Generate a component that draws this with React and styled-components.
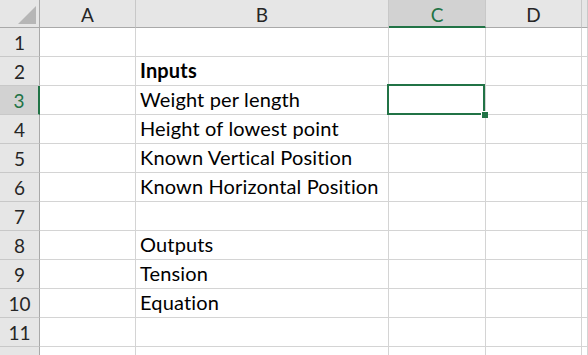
import React from "react";
import styled, { createGlobalStyle, css } from "styled-components";

const GlobalStyle = createGlobalStyle`
  html, body {
    margin: 0;
    padding: 0;
    background: #ffffff;
    overflow: hidden;
  }
  body {
    font-family: Lato, "Open Sans", sans-serif;
  }
`;

const columns = ["A", "B", "C", "D", ""];
const selectedCol = "C";
const selectedRow = 3;

const cellText = {
  2: { text: "Inputs", bold: true },
  3: { text: "Weight per length" },
  4: { text: "Height of lowest point" },
  5: { text: "Known Vertical Position" },
  6: { text: "Known Horizontal Position" },
  8: { text: "Outputs" },
  9: { text: "Tension" },
  10: { text: "Equation" },
};

const Sheet = styled.div`
  display: grid;
  grid-template-columns: 40px 96px 253px 97px 96px 1fr;
  grid-template-rows: 28px repeat(12, 29px);
  width: 588px;
  height: 355px;
  overflow: hidden;
  background: #ffffff;
`;

const Corner = styled.div`
  position: relative;
  background: #e6e6e6;
  border-right: 1px solid #a9a9a9;
  border-bottom: 1px solid #a9a9a9;
  box-sizing: border-box;

  &::after {
    content: "";
    position: absolute;
    right: 3px;
    bottom: 3px;
    width: 0;
    height: 0;
    border-left: 18px solid transparent;
    border-bottom: 18px solid #b6b6b6;
  }
`;

const ColHeader = styled.div`
  display: flex;
  align-items: center;
  justify-content: center;
  box-sizing: border-box;
  background: #e6e6e6;
  border-right: 1px solid #c8c8c8;
  border-bottom: 1px solid #a9a9a9;
  font-size: 19px;
  color: #262626;
  padding-top: 2px;

  ${(p) =>
    p.$active &&
    css`
      background: #d2d2d2;
      color: #217346;
      border-bottom: 2px solid #217346;
      padding-top: 3px;
    `}
`;

const RowHeader = styled.div`
  display: flex;
  align-items: center;
  justify-content: center;
  box-sizing: border-box;
  background: #e6e6e6;
  border-right: 1px solid #a9a9a9;
  border-bottom: 1px solid #c8c8c8;
  font-size: 19px;
  color: #262626;
  padding-top: 1px;

  ${(p) =>
    p.$active &&
    css`
      background: #d2d2d2;
      color: #217346;
      border-right: 2px solid #217346;
    `}
`;

const Cell = styled.div`
  position: relative;
  display: flex;
  align-items: flex-end;
  box-sizing: border-box;
  padding: 0 0 3px 4px;
  border-right: 1px solid #d4d4d4;
  border-bottom: 1px solid #d4d4d4;
  font-size: 20px;
  letter-spacing: 0.15px;
  font-weight: ${(p) => (p.$bold ? 700 : 400)};
  color: #000000;
  white-space: nowrap;
`;

const Selection = styled.div`
  position: absolute;
  left: -2px;
  top: -2px;
  right: 0;
  bottom: -1px;
  border: 2px solid #217346;
  pointer-events: none;
  z-index: 2;
`;

const FillHandle = styled.div`
  position: absolute;
  right: -5px;
  bottom: -5px;
  width: 6px;
  height: 6px;
  background: #217346;
  border-left: 1px solid #ffffff;
  border-top: 1px solid #ffffff;
`;

export default function App() {
  const rows = Array.from({ length: 12 }, (_, i) => i + 1);

  return (
    <>
      <GlobalStyle />
      <Sheet>
        <Corner />
        {columns.map((c, i) => (
          <ColHeader key={"h" + i} $active={c === selectedCol}>
            {c}
          </ColHeader>
        ))}
        {rows.map((r) => (
          <React.Fragment key={r}>
            <RowHeader $active={r === selectedRow}>{r <= 11 ? r : ""}</RowHeader>
            {columns.map((c, i) => {
              const content = c === "B" ? cellText[r] : null;
              const selected = c === selectedCol && r === selectedRow;
              return (
                <Cell key={c + i} $bold={content && content.bold}>
                  {content ? content.text : ""}
                  {selected && (
                    <Selection>
                      <FillHandle />
                    </Selection>
                  )}
                </Cell>
              );
            })}
          </React.Fragment>
        ))}
      </Sheet>
    </>
  );
}
